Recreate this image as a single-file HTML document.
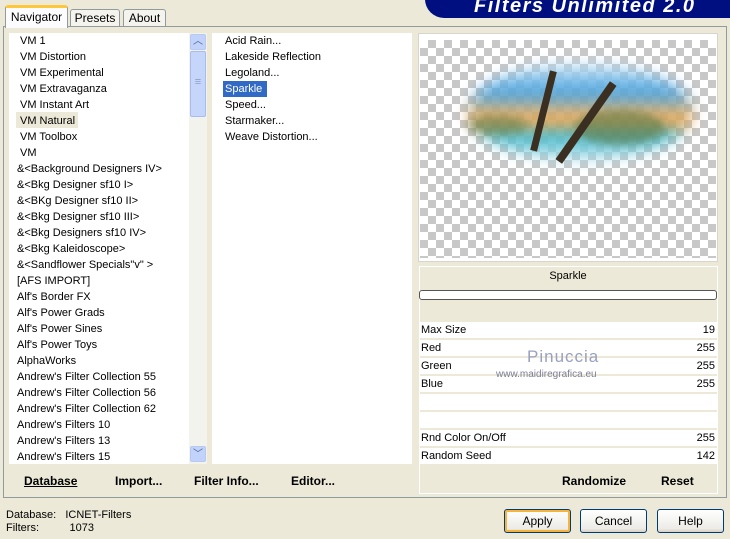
<!DOCTYPE html><html><head><style>
*{margin:0;padding:0;box-sizing:border-box}
body{width:730px;height:539px;background:#ece9d8;font-family:"Liberation Sans",sans-serif;font-size:11px;color:#000;position:relative;overflow:hidden}
.a{position:absolute}
.li{position:absolute;left:17px;line-height:16px;white-space:nowrap}
.row{position:absolute;left:419px;width:298px;height:16px;background:#fff;line-height:16px}
.row span{position:absolute}
.btn{position:absolute;top:509px;width:67px;height:24px;border:1px solid #003c74;border-radius:3px;background:linear-gradient(#fff,#ecebe6 85%,#d6d0c5);text-align:center;line-height:22px;font-size:12px}
.b{font-weight:bold;font-size:12px;position:absolute;top:474px}
</style></head><body>
<div class="a" style="left:3px;top:26px;width:724px;height:472px;border:1px solid #919b9c;background:#ece9d8"></div>
<div class="a" style="left:5px;top:5px;width:63px;height:23px;background:#fcfcfe;border:1px solid #919b9c;border-bottom:none;border-top:3px solid #ffc83c;border-radius:3px 3px 0 0;text-align:center;line-height:18px;font-size:12px">Navigator</div>
<div class="a" style="left:70px;top:9px;width:50px;height:18px;background:#f4f3ee;border:1px solid #919b9c;border-radius:3px 3px 0 0;text-align:center;line-height:17px;font-size:12px">Presets</div>
<div class="a" style="left:123px;top:9px;width:43px;height:18px;background:#f4f3ee;border:1px solid #919b9c;border-radius:3px 3px 0 0;text-align:center;line-height:17px;font-size:12px">About</div>
<div class="a" style="left:425px;top:-20px;width:320px;height:38px;background:#000f80;border-radius:40px 0 0 40px"></div>
<div class="a" style="left:474px;top:-5px;color:#fff;font-weight:bold;font-style:italic;font-size:20px;letter-spacing:1.5px">Filters Unlimited 2.0</div>
<div class="a" style="left:9px;top:33px;width:180px;height:431px;background:#fff"></div>
<div class="a" style="left:189px;top:33px;width:18px;height:431px;background:#f3f3ee"></div>
<div class="a" style="left:190px;top:34px;width:16px;height:16px;background:#c1d3fb;border:1px solid #b8c9f1;border-radius:2px;color:#4d6185;font-size:10px;text-align:center;line-height:14px">︿</div>
<div class="a" style="left:190px;top:51px;width:16px;height:66px;background:#c6d6fb;border:1px solid #a8bcf0;border-radius:2px;text-align:center;color:#8aa0d0;line-height:60px">≡</div>
<div class="a" style="left:190px;top:446px;width:16px;height:16px;background:#c1d3fb;border:1px solid #b8c9f1;border-radius:2px;color:#4d6185;font-size:10px;text-align:center;line-height:16px">﹀</div>
<div class="a" style="left:16px;top:112px;width:62px;height:16px;background:#ece9d8"></div>
<div style="position:absolute;left:3px;top:33px">
<div class="li" style="top:0">VM 1</div><div class="li" style="top:16px">VM Distortion</div><div class="li" style="top:32px">VM Experimental</div><div class="li" style="top:48px">VM Extravaganza</div><div class="li" style="top:64px">VM Instant Art</div><div class="li" style="top:80px">VM Natural</div><div class="li" style="top:96px">VM Toolbox</div><div class="li" style="top:112px">VM</div>
</div>
<div style="position:absolute;left:0;top:161px">
<div class="li" style="top:0">&amp;&lt;Background Designers IV&gt;</div><div class="li" style="top:16px">&amp;&lt;Bkg Designer sf10 I&gt;</div><div class="li" style="top:32px">&amp;&lt;BKg Designer sf10 II&gt;</div><div class="li" style="top:48px">&amp;&lt;Bkg Designer sf10 III&gt;</div><div class="li" style="top:64px">&amp;&lt;Bkg Designers sf10 IV&gt;</div><div class="li" style="top:80px">&amp;&lt;Bkg Kaleidoscope&gt;</div><div class="li" style="top:96px">&amp;&lt;Sandflower Specials"v" &gt;</div><div class="li" style="top:112px">[AFS IMPORT]</div><div class="li" style="top:128px">Alf's Border FX</div><div class="li" style="top:144px">Alf's Power Grads</div><div class="li" style="top:160px">Alf's Power Sines</div><div class="li" style="top:176px">Alf's Power Toys</div><div class="li" style="top:192px">AlphaWorks</div><div class="li" style="top:208px">Andrew's Filter Collection 55</div><div class="li" style="top:224px">Andrew's Filter Collection 56</div><div class="li" style="top:240px">Andrew's Filter Collection 62</div><div class="li" style="top:256px">Andrew's Filters 10</div><div class="li" style="top:272px">Andrew's Filters 13</div><div class="li" style="top:288px">Andrew's Filters 15</div>
</div>
<div class="a" style="left:212px;top:33px;width:200px;height:431px;background:#fff"></div>
<div class="a" style="left:223px;top:81px;width:44px;height:16px;background:#316ac5"></div>
<div style="position:absolute;left:208px;top:33px">
<div class="li" style="top:0">Acid Rain...</div><div class="li" style="top:16px">Lakeside Reflection</div><div class="li" style="top:32px">Legoland...</div><div class="li" style="top:48px;color:#fff">Sparkle</div><div class="li" style="top:64px">Speed...</div><div class="li" style="top:80px">Starmaker...</div><div class="li" style="top:96px">Weave Distortion...</div>
</div>
<div class="b" style="left:24px;text-decoration:underline">Database</div>
<div class="b" style="left:115px">Import...</div>
<div class="b" style="left:194px">Filter Info...</div>
<div class="b" style="left:291px">Editor...</div>
<div class="a" style="left:418px;top:33px;width:300px;height:229px;background:#fff;border:1px solid #d8d6cc"></div>
<div class="a" style="left:420px;top:40px;width:296px;height:218px;background-color:#fff;background-image:linear-gradient(45deg,#c8c8c8 25%,transparent 25%,transparent 75%,#c8c8c8 75%),linear-gradient(45deg,#c8c8c8 25%,transparent 25%,transparent 75%,#c8c8c8 75%);background-size:16px 16px;background-position:0 0,8px 8px"></div>
<div class="a" style="left:468px;top:64px;width:225px;height:96px;border-radius:50%;filter:blur(7px);background:linear-gradient(#cfe6f5 0%,#3b9de0 30%,#f6b25a 55%,#f39a3a 62%,#2fb4c8 72%,#bfe2ee 100%);opacity:.9"></div>
<div class="a" style="left:575px;top:110px;width:90px;height:35px;border-radius:50%;filter:blur(4px);background:rgba(90,120,70,.6)"></div>
<div class="a" style="left:467px;top:115px;width:60px;height:20px;border-radius:50%;filter:blur(4px);background:rgba(90,120,70,.5)"></div>
<div class="a" style="left:540px;top:70px;width:7px;height:82px;background:#3a2f20;transform:rotate(14deg)"></div>
<div class="a" style="left:582px;top:75px;width:8px;height:95px;background:#3a2f20;transform:rotate(35deg)"></div>
<div class="a" style="left:419px;top:266px;width:299px;height:228px;background:#ece9d8;border:1px solid #fff"></div>
<div class="a" style="left:419px;top:270px;width:298px;text-align:center;font-size:11px">Sparkle</div>
<div class="a" style="left:419px;top:290px;width:298px;height:10px;background:#fff;border:1px solid #555;border-radius:3px"></div>
<div class="row" style="top:322px"><span style="left:2px">Max Size</span><span style="right:2px">19</span></div>
<div class="row" style="top:340px"><span style="left:2px">Red</span><span style="right:2px">255</span></div>
<div class="row" style="top:358px"><span style="left:2px">Green</span><span style="right:2px">255</span></div>
<div class="row" style="top:376px"><span style="left:2px">Blue</span><span style="right:2px">255</span></div>
<div class="row" style="top:394px"></div>
<div class="row" style="top:412px"></div>
<div class="row" style="top:430px"><span style="left:2px">Rnd Color On/Off</span><span style="right:2px">255</span></div>
<div class="row" style="top:448px"><span style="left:2px">Random Seed</span><span style="right:2px">142</span></div>
<div class="a" style="left:527px;top:347px;color:#9aa0c0;font-size:17px;letter-spacing:1px">Pinuccia</div>
<div class="a" style="left:496px;top:369px;color:#7a7f98;font-size:10px">www.maidiregrafica.eu</div>
<div class="b" style="left:562px">Randomize</div>
<div class="b" style="left:661px">Reset</div>
<div class="a" style="left:6px;top:509px;line-height:13px;font-size:11px">Database:&nbsp;&nbsp; ICNET-Filters<br>Filters:&nbsp;&nbsp;&nbsp;&nbsp;&nbsp;&nbsp;&nbsp;&nbsp;&nbsp; 1073</div>
<div class="btn" style="left:504px;box-shadow:inset 0 0 0 2px #f8b33b">Apply</div>
<div class="btn" style="left:580px">Cancel</div>
<div class="btn" style="left:657px">Help</div>
</body></html>
